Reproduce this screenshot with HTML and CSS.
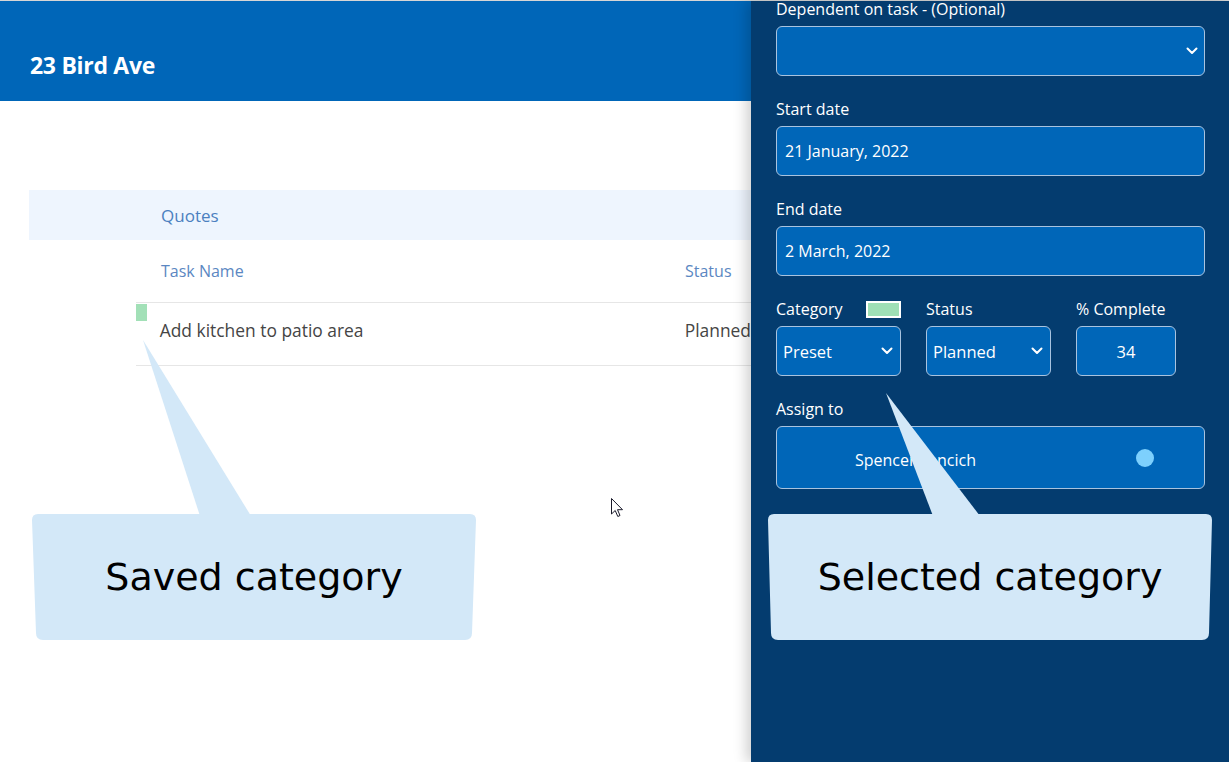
FILE: index.html
```html
<!DOCTYPE html>
<html lang="en">
<head>
<meta charset="utf-8">
<title>23 Bird Ave</title>
<link rel="stylesheet" href="styles.css">
</head>
<body>
<div class="app">
  <main class="main">
    <header class="topbar"><h1 class="title">23 Bird Ave</h1></header>
    <section class="tasks">
      <div class="group">Quotes</div>
      <div class="row row-head">
        <span class="c-name">Task Name</span>
        <span class="c-status">Status</span>
      </div>
      <div class="row row-task">
        <span class="cat-mark"></span>
        <span class="c-name">Add kitchen to patio area</span>
        <span class="c-status">Planned</span>
      </div>
    </section>
  </main>

  <aside class="panel">
    <form class="form">
      <div class="field">
        <label class="label">Dependent on task - (Optional)</label>
        <div class="box box-select">
          <span class="box-text"></span>
          <svg class="chev" viewBox="0 0 12 8" width="12" height="8"><path d="M1.5 1.5 L6 6 L10.5 1.5" fill="none" stroke="#fff" stroke-width="2" stroke-linecap="round" stroke-linejoin="round"/></svg>
        </div>
      </div>
      <div class="field">
        <label class="label">Start date</label>
        <div class="box"><span class="box-text">21 January, 2022</span></div>
      </div>
      <div class="field">
        <label class="label">End date</label>
        <div class="box"><span class="box-text">2 March, 2022</span></div>
      </div>
      <div class="field-row">
        <div class="field col-cat">
          <label class="label label-cat">Category <span class="swatch"></span></label>
          <div class="box box-select small">
            <span class="box-text">Preset</span>
            <svg class="chev" viewBox="0 0 12 8" width="12" height="8"><path d="M1.5 1.5 L6 6 L10.5 1.5" fill="none" stroke="#fff" stroke-width="2" stroke-linecap="round" stroke-linejoin="round"/></svg>
          </div>
        </div>
        <div class="field col-status">
          <label class="label">Status</label>
          <div class="box box-select small">
            <span class="box-text">Planned</span>
            <svg class="chev" viewBox="0 0 12 8" width="12" height="8"><path d="M1.5 1.5 L6 6 L10.5 1.5" fill="none" stroke="#fff" stroke-width="2" stroke-linecap="round" stroke-linejoin="round"/></svg>
          </div>
        </div>
        <div class="field col-pct">
          <label class="label">% Complete</label>
          <div class="box box-center"><span class="box-text">34</span></div>
        </div>
      </div>
      <div class="field">
        <label class="label">Assign to</label>
        <div class="box box-assign">
          <span class="assignee">Spencer Lancich</span>
          <span class="dot"></span>
        </div>
      </div>
    </form>
  </aside>
</div>

<svg class="callouts" width="1229" height="762" viewBox="0 0 1229 762">
  <path fill="#d3e8f8" d="M143 340 L200 516 L251 516 Z"/>
  <path fill="#d3e8f8" d="M38 514 L470 514 Q476 514 476 520 L472 633 Q472 640 465 640 L43 640 Q36 640 36 633 L32 520 Q32 514 38 514 Z"/>
  <path fill="#d3e8f8" d="M886 393 L933 516 L980 516 Z"/>
  <path fill="#d3e8f8" d="M774 514 L1206 514 Q1212 514 1212 520 L1209 633 Q1209 640 1202 640 L778 640 Q771 640 771 633 L768 520 Q768 514 774 514 Z"/>
</svg>
<div class="callout-text callout-left">Saved category</div>
<div class="callout-text callout-right">Selected category</div>

<svg class="cursor" width="13" height="20" viewBox="0 0 13 20">
  <path d="M0.5 0.5 L0.5 16 L4.2 12.5 L6.8 18.5 L9 17.5 L6.5 11.7 L11.5 11.7 Z" fill="#fff" stroke="#1a1a2a" stroke-width="1" stroke-linejoin="miter"/>
</svg>
</body>
</html>
```

FILE: styles.css
```css
* { box-sizing: border-box; }

html, body {
  margin: 0;
  padding: 0;
  width: 1229px;
  height: 762px;
  overflow: hidden;
  background: #ffffff;
  font-family: "Open Sans", "Noto Sans", sans-serif;
}

.app {
  display: flex;
  height: 762px;
  border-top: 1px solid #d6d6d6;
}

.main {
  width: 751px;
  flex: 0 0 751px;
  display: flex;
  flex-direction: column;
}

.topbar {
  height: 100px;
  background: #0066b8;
  display: flex;
  align-items: flex-end;
  padding: 0 0 21px 30px;
}

.title {
  margin: 0;
  color: #ffffff;
  font-size: 23px;
  font-weight: 700;
  line-height: 30px;
  letter-spacing: -0.3px;
}

.tasks {
  margin-top: 89px;
  margin-left: 29px;
  display: flex;
  flex-direction: column;
}

.group {
  height: 50px;
  background: #eef5fe;
  padding-left: 132px;
  display: flex;
  align-items: center;
  color: #4b80c0;
  font-size: 17px;
}

.row {
  margin-left: 107px;
  display: flex;
  align-items: center;
  font-size: 16px;
}

.row-head {
  height: 62px;
  color: #5b87c2;
  padding-left: 25px;
}

.row-task {
  height: 64px;
  border-top: 1px solid #e6e6e6;
  border-bottom: 1px solid #e6e6e6;
  color: #454545;
  align-items: flex-start;
}

.row-task .c-name,
.row-task .c-status {
  margin-top: 15px;
  font-size: 17.4px;
}

.cat-mark {
  width: 12px;
  height: 17px;
  margin-top: 1px;
  margin-right: 13px;
  background: #a2e0b7;
}

.c-name { width: 524px; flex: 0 0 524px; white-space: nowrap; }
.c-status { white-space: nowrap; }
.row-task .c-status { padding-left: 1px; }

/* Side panel */
.panel {
  flex: 1;
  background: #043c6f;
  padding-left: 25px;
  box-shadow: -5px 0 12px rgba(0, 0, 0, 0.18);
  position: relative;
  z-index: 1;
}

.form {
  width: 429px;
  margin-top: -3px;
  display: flex;
  flex-direction: column;
  gap: 22px;
}

.field {
  display: flex;
  flex-direction: column;
}

.label {
  color: #ffffff;
  font-size: 16px;
  line-height: 22px;
  height: 22px;
  margin-bottom: 6px;
  white-space: nowrap;
}

.label-cat {
  display: flex;
  align-items: center;
}

.swatch {
  display: inline-block;
  width: 35px;
  height: 17px;
  margin-left: 23px;
  margin-top: 1px;
  background: #9fe0b6;
  border: 2px solid #ffffff;
}

.box {
  height: 50px;
  background: #0066b8;
  border: 1px solid #a9c3df;
  border-radius: 6px;
  display: flex;
  align-items: center;
  padding: 0 8px;
  color: #ffffff;
  font-size: 16px;
}

.box-select { justify-content: space-between; padding-right: 6px; }
.box-select.small { padding-left: 6px; padding-right: 7px; font-size: 16.5px; }
.box-center { justify-content: center; font-size: 16.5px; }

.chev { display: block; }

.field-row {
  display: flex;
  gap: 25px;
}

.col-cat { width: 125px; }
.col-status { width: 125px; }
.col-pct { width: 100px; }

.box-assign {
  height: 63px;
  padding-left: 78px;
  padding-right: 50px;
  justify-content: space-between;
  padding-top: 4px;
}

.assignee { font-size: 16px; }

.dot {
  width: 18px;
  height: 18px;
  border-radius: 50%;
  background: #7dd0fd;
  margin-top: -3px;
}

/* Overlays */
.callouts {
  position: absolute;
  left: 0;
  top: 0;
  z-index: 5;
  pointer-events: none;
}

.callout-text {
  position: absolute;
  z-index: 6;
  top: 514px;
  height: 126px;
  display: flex;
  align-items: center;
  justify-content: center;
  font-family: "DejaVu Sans", Verdana, sans-serif;
  font-size: 38px;
  color: #000000;
  white-space: nowrap;
  padding-bottom: 1px;
}

.callout-left { left: 32px; width: 444px; }
.callout-right { left: 768px; width: 444px; }

.cursor {
  position: absolute;
  left: 611px;
  top: 498px;
  z-index: 7;
}
```
